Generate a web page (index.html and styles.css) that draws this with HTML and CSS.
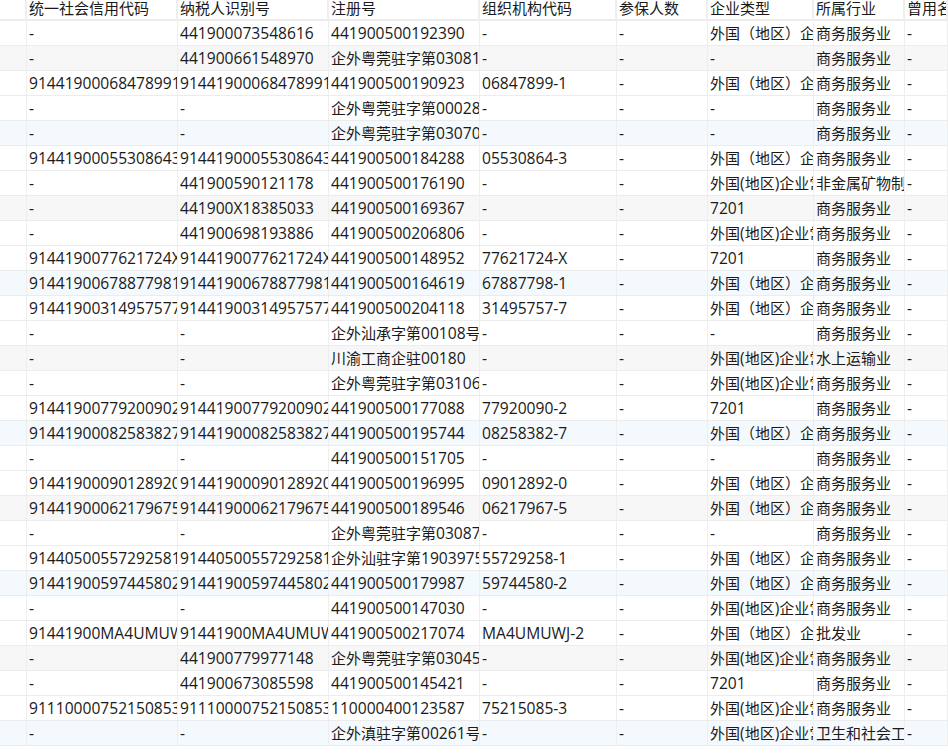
FILE: index.html
```html
<!DOCTYPE html>
<html lang="zh-CN">
<head>
<meta charset="utf-8">
<title>企业列表</title>
<link rel="stylesheet" href="styles.css">
</head>
<body>
<table class="grid">
<colgroup><col class="c0"><col class="c1"><col class="c2"><col class="c3"><col class="c4"><col class="c5"><col class="c6"><col class="c7"><col class="c8"></colgroup>
<thead><tr><th></th><th>统一社会信用代码</th><th>纳税人识别号</th><th>注册号</th><th>组织机构代码</th><th>参保人数</th><th>企业类型</th><th>所属行业</th><th>曾用名</th></tr></thead>
<tbody id="b"></tbody>
</table>
<script src="data.js"></script>
</body>
</html>
```
FILE: data.js
```js
const A = "外国（地区）企业常驻代表机构", B = "外国(地区)企业常驻代表机构", S = "商务服务业";
const rows = [
["-","441900073548616","441900500192390","-",A,S,""],
["-","441900661548970","企外粤莞驻字第03081号","-","-",S,"g"],
["91441900068478991X","91441900068478991X","441900500190923","06847899-1",A,S,""],
["-","-","企外粤莞驻字第00028号","-","-",S,""],
["-","-","企外粤莞驻字第03070号","-","-",S,"b"],
["91441900055308643X","91441900055308643X","441900500184288","05530864-3",A,S,""],
["-","441900590121178","441900500176190","-",B,"非金属矿物制品业",""],
["-","441900X18385033","441900500169367","-","7201",S,"g"],
["-","441900698193886","441900500206806","-",B,S,""],
["9144190077621724XX","9144190077621724XX","441900500148952","77621724-X","7201",S,""],
["91441900678877981X","91441900678877981X","441900500164619","67887798-1",A,S,"b"],
["91441900314957577X","91441900314957577X","441900500204118","31495757-7",A,S,""],
["-","-","企外汕承字第00108号","-","-",S,""],
["-","-","川渝工商企驻00180","-",B,"水上运输业","g"],
["-","-","企外粤莞驻字第03106号","-",B,S,""],
["91441900779200902X","91441900779200902X","441900500177088","77920090-2","7201",S,""],
["91441900082583827X","91441900082583827X","441900500195744","08258382-7",A,S,"b"],
["-","-","441900500151705","-","-",S,""],
["91441900090128920X","91441900090128920X","441900500196995","09012892-0",A,S,""],
["91441900062179675X","91441900062179675X","441900500189546","06217967-5",A,S,"g"],
["-","-","企外粤莞驻字第03087号","-","-",S,""],
["91440500557292581X","91440500557292581X","企外汕驻字第1903975","55729258-1",A,S,""],
["91441900597445802X","91441900597445802X","441900500179987","59744580-2",A,S,"b"],
["-","-","441900500147030","-",B,S,""],
["91441900MA4UMUWJ2X","91441900MA4UMUWJ2X","441900500217074","MA4UMUWJ-2","外国（地区）企业常驻代表机构","批发业",""],
["-","441900779977148","企外粤莞驻字第03045号","-",B,S,"g"],
["-","441900673085598","441900500145421","-","7201",S,""],
["91110000752150853X","91110000752150853X","110000400123587","75215085-3",B,S,""],
["-","-","企外滇驻字第00261号","-",B,"卫生和社会工作","b"]
];
const body = document.getElementById("b");
function fill(td, text) {
  for (const part of text.split(/([\x21-\x7e]+)/)) {
    if (!part) continue;
    if (/^[\x21-\x7e]/.test(part)) {
      const s = document.createElement("span");
      s.className = "n";
      s.textContent = part;
      td.appendChild(s);
    } else {
      td.appendChild(document.createTextNode(part));
    }
  }
}
for (const r of rows) {
  const tr = document.createElement("tr");
  if (r[6]) tr.className = r[6] === "g" ? "grey" : "blue";
  const vals = ["", r[0], r[1], r[2], r[3], "-", r[4], r[5], "-"];
  for (const v of vals) {
    const td = document.createElement("td");
    fill(td, v);
    tr.appendChild(td);
  }
  body.appendChild(tr);
}
```
FILE: styles.css
```css
html, body { margin: 0; padding: 0; background: #fff; }
body { width: 948px; height: 755px; overflow: hidden; }
.grid {
  table-layout: fixed;
  border-collapse: separate;
  border-spacing: 0;
  width: 948px;
  font: 15px/24px "Noto Sans CJK SC", "Open Sans", sans-serif;
  color: #1a1a1a;
}
.n { font-family: "Open Sans", sans-serif; font-size: 15.6px; }
.c0 { width: 27px; }
.c1 { width: 151px; }
.c2 { width: 151px; }
.c3 { width: 151px; }
.c4 { width: 137px; }
.c5 { width: 91px; }
.c6 { width: 106px; }
.c7 { width: 91px; }
.c8 { width: 43px; }
th, td {
  padding: 0 0 0 2px;
  overflow: hidden;
  white-space: nowrap;
  border-right: 1px solid #eeeeee;
  border-bottom: 1px solid #ececec;
  box-sizing: border-box;
  font-weight: 400;
  text-align: left;
  height: 25px;
}
th {
  height: 21px;
  line-height: 16px;
  vertical-align: top;
  border-bottom-width: 2px;
  border-right-width: 2px;
}
tr.grey td { background: #f7f7f7; }
tr.blue td { background: #f4f9fd; }
```
